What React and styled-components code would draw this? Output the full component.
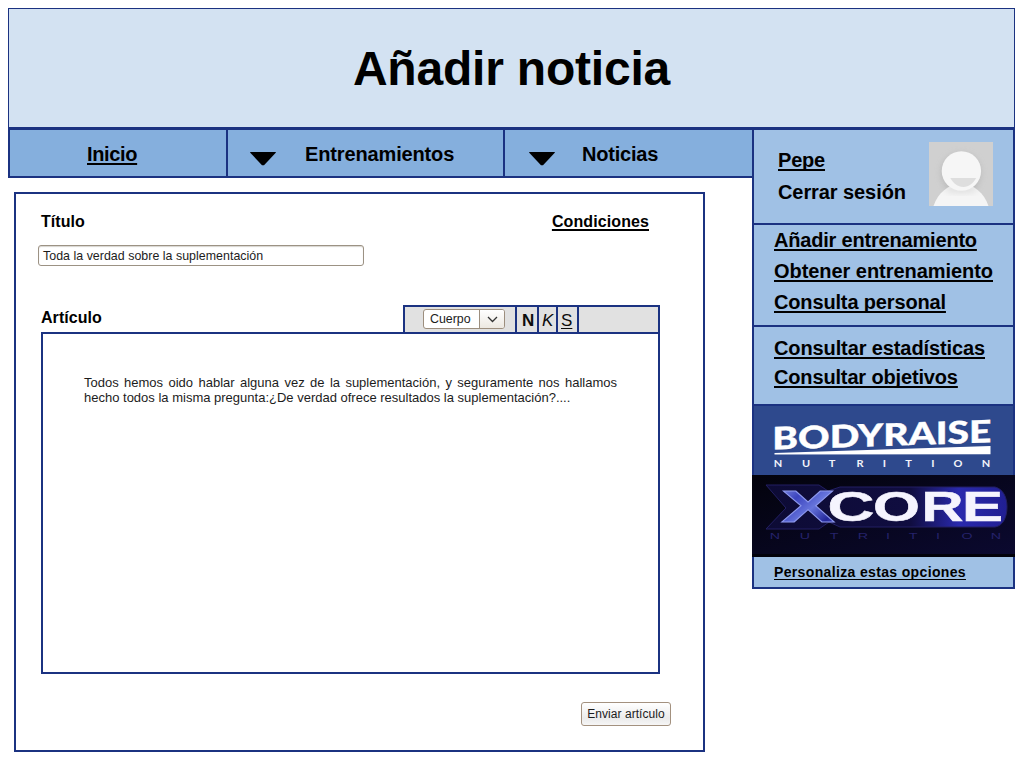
import React from 'react';
import styled, { createGlobalStyle } from 'styled-components';

const navy = '#1b3281';

const GlobalStyle = createGlobalStyle`
  * { box-sizing: border-box; }
  body {
    margin: 0;
    background: #fff;
    color: #000;
    font-family: 'Liberation Sans', Arial, sans-serif;
  }
`;

const Page = styled.div`
  width: 1024px;
  height: 768px;
  padding: 8px 9px 0 8px;
`;

const Header = styled.header`
  height: 120px;
  padding-top: 1px;
  display: flex;
  justify-content: center;
  border: 1px solid ${navy};
  background: #d3e2f2;
`;

const Title = styled.h1`
  margin: 0;
  font-size: 48px;
  line-height: 117px;
  letter-spacing: -0.2px;
`;

const Columns = styled.div`
  display: flex;
  align-items: flex-start;
`;

const Main = styled.main`
  width: 744px;
`;

const Nav = styled.nav`
  display: flex;
  height: 50px;
  border-top: 2px solid ${navy};
  border-bottom: 2px solid ${navy};
  background: #85afdd;
`;

const NavItem = styled.div`
  display: flex;
  width: ${(p) => p.$width}px;
  padding-left: ${(p) => p.$indent}px;
  gap: ${(p) => p.$gap || 0}px;
  border-left: 2px solid ${navy};
`;

const Arrow = styled.svg`
  width: 28px;
  height: 15px;
  margin-top: 21px;
`;

const Text = styled.span`
  display: block;
  width: max-content;
  white-space: nowrap;
  font-weight: bold;
  font-size: ${(p) => p.$size || 20}px;
  line-height: ${(p) => p.$line}px;
  letter-spacing: ${(p) => p.$spacing || 0}px;
`;

const Link = styled(Text).attrs({ as: 'a' })`
  text-decoration: underline;
  text-decoration-thickness: ${(p) => p.$thick || 2}px;
  text-underline-offset: 2px;
  text-decoration-skip-ink: none;
`;

const Panel = styled.section`
  width: 691px;
  height: 560px;
  margin: 14px 0 0 6px;
  padding: 14px 32px 0 22px;
  display: flex;
  flex-direction: column;
  border: 2px solid ${navy};
`;

const TitleRow = styled.div`
  display: flex;
  justify-content: space-between;
  padding: 0 22px 0 3px;
`;

const TitleInput = styled.div`
  width: 326px;
  height: 21px;
  margin-top: 10px;
  padding-left: 4px;
  border: 1px solid #9c9284;
  border-radius: 3px;
  box-shadow: inset 0 1px 1px #d8d5d0;
  color: #1c1c1c;
  font-size: 12.4px;
  line-height: 20px;
  letter-spacing: 0.03px;
`;

const EditorHead = styled.div`
  display: flex;
  justify-content: space-between;
  height: 27px;
  margin: 39px 11px 0 3px;
`;

const Toolbar = styled.div`
  display: flex;
  width: 257px;
  border: 2px solid ${navy};
  border-bottom: 0;
  background: #e1e1e1;
`;

const SelectCell = styled.div`
  width: 110px;
  padding: 2px 0 0 18px;
`;

const Select = styled.div`
  display: flex;
  width: 82px;
  height: 20px;
  border: 1px solid #9c8e7e;
  border-radius: 3px;
  overflow: hidden;
  background: #fff;
  color: #1c1c1c;
  font-size: 12.4px;
  line-height: 19px;
`;

const SelectValue = styled.span`
  width: 55px;
  padding-left: 6px;
`;

const SelectButton = styled.span`
  display: flex;
  flex: 1;
  align-items: center;
  justify-content: center;
  border-left: 1px solid #9c8e7e;
  background: linear-gradient(#fff, #ece8e1);
`;

const Tool = styled.div`
  width: ${(p) => p.$width}px;
  padding-left: ${(p) => p.$indent}px;
  border-left: 2px solid ${navy};
  color: #0c0c0c;
  font-size: 17px;
  line-height: 27px;
  font-weight: ${(p) => (p.$bold ? 'bold' : 'normal')};
  font-style: ${(p) => (p.$italic ? 'italic' : 'normal')};
  text-decoration: ${(p) => (p.$underline ? 'underline 1px' : 'none')};
  text-underline-offset: 2px;
`;

const Editor = styled.div`
  height: 342px;
  margin: 0 11px 0 3px;
  padding: 41px 41px 0;
  border: 2px solid ${navy};
`;

const Paragraph = styled.p`
  margin: 0;
  color: #1c1c1c;
  font-size: 13px;
  line-height: 15px;
  text-align: justify;
`;

const Submit = styled.button`
  align-self: flex-end;
  width: 90px;
  height: 24px;
  margin-top: 28px;
  padding: 0;
  border: 1px solid #a3917f;
  border-radius: 3px;
  background: linear-gradient(#fff, #ebebeb 70%, #f6f6f6);
  color: #1c1c1c;
  font: 12px/22px 'Liberation Sans', Arial, sans-serif;
  letter-spacing: 0.05px;
  white-space: nowrap;
`;

const Sidebar = styled.aside`
  width: 263px;
  height: 461px;
  border: 2px solid ${navy};
  background: #a0c1e5;
`;

const UserBox = styled.div`
  display: flex;
  justify-content: space-between;
  height: 95px;
  padding: 12px 20px 0 24px;
  border-bottom: 2px solid ${navy};
`;

const UserLinks = styled.div`
  padding-top: 2px;
`;

const LinkGroup = styled.div`
  height: ${(p) => p.$height}px;
  padding: ${(p) => p.$top}px 0 0 20px;
  border-bottom: 2px solid ${navy};
`;

const Banner = styled.svg`
  display: block;
  width: ${(p) => p.width}px;
  height: ${(p) => p.height}px;
  margin-left: ${(p) => (p.$wide ? -2 : 0)}px;
`;

const Footer = styled.div`
  padding: 6px 0 0 20px;
`;

function DownArrow() {
  return (
    <Arrow viewBox="0 0 28 15">
      <path d="M1 1H27L26.5 2L15 14.2H13L1.5 2Z" fill="#000" />
    </Arrow>
  );
}

function Avatar() {
  return (
    <svg width="64" height="64" viewBox="0 0 64 64">
      <defs>
        <filter id="soft" x="-30%" y="-30%" width="160%" height="160%">
          <feGaussianBlur stdDeviation="3" />
        </filter>
        <clipPath id="frame"><path d="M0 0H64V64H0Z" /></clipPath>
      </defs>
      <g clipPath="url(#frame)">
        <path d="M0 0H64V64H0Z" fill="#d0d0d0" />
        <circle cx="32" cy="31" r="20" fill="#aaa" opacity=".55" filter="url(#soft)" />
        <path d="M4.5 64C9 51 19 42 32 42S55 51 59.5 64Z" fill="#f5f5f5" />
        <ellipse cx="32" cy="47" rx="17" ry="4" fill="#aaa" opacity=".3" filter="url(#soft)" />
        <circle cx="32.4" cy="29" r="19.7" fill="#f6f6f6" />
        <path d="M21.3 36H47.2C44 41.5 40 45 34.3 45S24.5 41.5 21.3 36Z" fill="#dedede" />
      </g>
    </svg>
  );
}

const nutrition = 'NUTRITION'.split('');
const bodyX = [24, 52, 78, 106, 130.5, 154.5, 179, 204, 232];
const coreX = [23, 53, 82, 111, 136, 161, 186, 215, 244];

function BodyraiseBanner() {
  return (
    <Banner width="259" height="69" viewBox="0 0 259 69">
      <path d="M0 0H259V69H0Z" fill="#2e498d" />
      <text transform="matrix(1 -0.033 0 1 18.3 43.6)" textLength="219" lengthAdjust="spacingAndGlyphs"
        fontFamily="Lato, sans-serif" fontWeight="900" fontSize="31" fill="#fff"
        stroke="#fff" strokeWidth=".4">BODYRAISE</text>
      <path d="M20.5 47L236.5 40V48.3L20.5 48.6Z" fill="#fff" />
      {nutrition.map((c, i) => (
        <text key={i} transform={`translate(${bodyX[i]} 61) scale(1.15 1)`} textAnchor="middle"
          fontFamily="Lato, sans-serif" fontWeight="bold" fontSize="9.6" fill="#f2f4fa">{c}</text>
      ))}
    </Banner>
  );
}

function XcoreBanner() {
  const letters = [['C', 75.5, 47], ['O', 121, 47], ['R', 169.5, 42], ['E', 210, 41]];
  return (
    <Banner $wide width="263" height="82" viewBox="0 0 263 82">
      <defs>
        <linearGradient id="night" x1="0" y1="0" x2="1" y2="1">
          <stop offset="0" stopColor="#03030c" /><stop offset="1" stopColor="#0b0930" />
        </linearGradient>
        <linearGradient id="plate">
          <stop offset="0" stopColor="#0d0b35" /><stop offset=".6" stopColor="#100d40" />
          <stop offset=".8" stopColor="#2929ad" /><stop offset="1" stopColor="#211f92" />
        </linearGradient>
        <linearGradient id="steel" x1="0" y1="0" x2="1" y2="1">
          <stop offset="0" stopColor="#8d99ea" /><stop offset=".3" stopColor="#3b44be" />
          <stop offset=".55" stopColor="#6775dc" /><stop offset=".8" stopColor="#23279a" />
          <stop offset="1" stopColor="#5361c8" />
        </linearGradient>
      </defs>
      <path d="M0 0H263V82H0Z" fill="url(#night)" />
      <path d="M0 79H263V82H0Z" fill="#02020a" />
      <path d="M14 10H67L76 16L88 12H243C251 14 255 22 255 32S251 51 243 52H88L77 47L67 54H14L34 33Z"
        fill="url(#plate)" stroke="#221f62" strokeWidth="1" />
      <text transform="matrix(1.5 0 0 1 29 47)" textLength="36" lengthAdjust="spacingAndGlyphs"
        fontFamily="Liberation Sans, sans-serif" fontWeight="bold" fontSize="44" fill="url(#steel)"
        stroke="#8d98ed" strokeWidth=".8">X</text>
      {letters.map(([c, x, w]) => (
        <text key={c} x={x} y="46" textLength={w} lengthAdjust="spacingAndGlyphs"
          fontFamily="Liberation Sans, sans-serif" fontWeight="bold" fontSize="42" fill="#f5f4fe"
          stroke="#f5f4fe" strokeWidth=".5">{c}</text>
      ))}
      {nutrition.map((c, i) => (
        <text key={i} transform={`translate(${coreX[i]} 64.3) scale(1.5 1)`} textAnchor="middle"
          fontFamily="Liberation Sans, sans-serif" fontSize="9.5" fill="#25226a">{c}</text>
      ))}
    </Banner>
  );
}

export default function App() {
  return (
    <>
      <GlobalStyle />
      <Page>
        <Header><Title>Añadir noticia</Title></Header>
        <Columns>
          <Main>
            <Nav>
              <NavItem $width={218} $indent={77}><Link $line={48} $spacing={-0.35}>Inicio</Link></NavItem>
              <NavItem $width={277} $indent={21} $gap={28}>
                <DownArrow /><Text $line={48} $spacing={-0.14}>Entrenamientos</Text>
              </NavItem>
              <NavItem $width={249} $indent={23} $gap={26}>
                <DownArrow /><Text $line={48} $spacing={-0.22}>Noticias</Text>
              </NavItem>
            </Nav>
            <Panel>
              <TitleRow>
                <Text $size={16} $line={27} $spacing={0.05}>Título</Text>
                <Link $size={16} $line={27} $spacing={0.1}>Condiciones</Link>
              </TitleRow>
              <TitleInput>Toda la verdad sobre la suplementación</TitleInput>
              <EditorHead>
                <Text $size={16} $line={25} $spacing={0.05}>Artículo</Text>
                <Toolbar>
                  <SelectCell>
                    <Select>
                      <SelectValue>Cuerpo</SelectValue>
                      <SelectButton>
                        <svg width="11" height="7" viewBox="0 0 11 7">
                          <path d="M1 1L5.5 5.5L10 1" fill="none" stroke="#333" strokeWidth="1.3" />
                        </svg>
                      </SelectButton>
                    </Select>
                  </SelectCell>
                  <Tool $width={22} $indent={5} $bold>N</Tool>
                  <Tool $width={19} $indent={3} $italic>K</Tool>
                  <Tool $width={21} $indent={3} $underline>S</Tool>
                  <Tool $width={81} $indent={0} />
                </Toolbar>
              </EditorHead>
              <Editor>
                <Paragraph>
                  Todos hemos oido hablar alguna vez de la suplementación, y seguramente nos hallamos
                  hecho todos la misma pregunta:¿De verdad ofrece resultados la suplementación?....
                </Paragraph>
              </Editor>
              <Submit>Enviar artículo</Submit>
            </Panel>
          </Main>
          <Sidebar>
            <UserBox>
              <UserLinks>
                <Link $line={32} $spacing={-0.2}>Pepe</Link>
                <Text $line={32} $spacing={-0.08}>Cerrar sesión</Text>
              </UserLinks>
              <Avatar />
            </UserBox>
            <LinkGroup $height={102} $top={0}>
              <Link $line={31} $spacing={-0.19}>Añadir entrenamiento</Link>
              <Link $line={31} $spacing={-0.05}>Obtener entrenamiento</Link>
              <Link $line={31} $spacing={-0.15}>Consulta personal</Link>
            </LinkGroup>
            <LinkGroup $height={79} $top={7}>
              <Link $line={29} $spacing={-0.11}>Consultar estadísticas</Link>
              <Link $line={29} $spacing={-0.15}>Consultar objetivos</Link>
            </LinkGroup>
            <BodyraiseBanner />
            <XcoreBanner />
            <Footer>
              <Link $size={14} $line={18} $thick={1} $spacing={0.35}>Personaliza estas opciones</Link>
            </Footer>
          </Sidebar>
        </Columns>
      </Page>
    </>
  );
}
